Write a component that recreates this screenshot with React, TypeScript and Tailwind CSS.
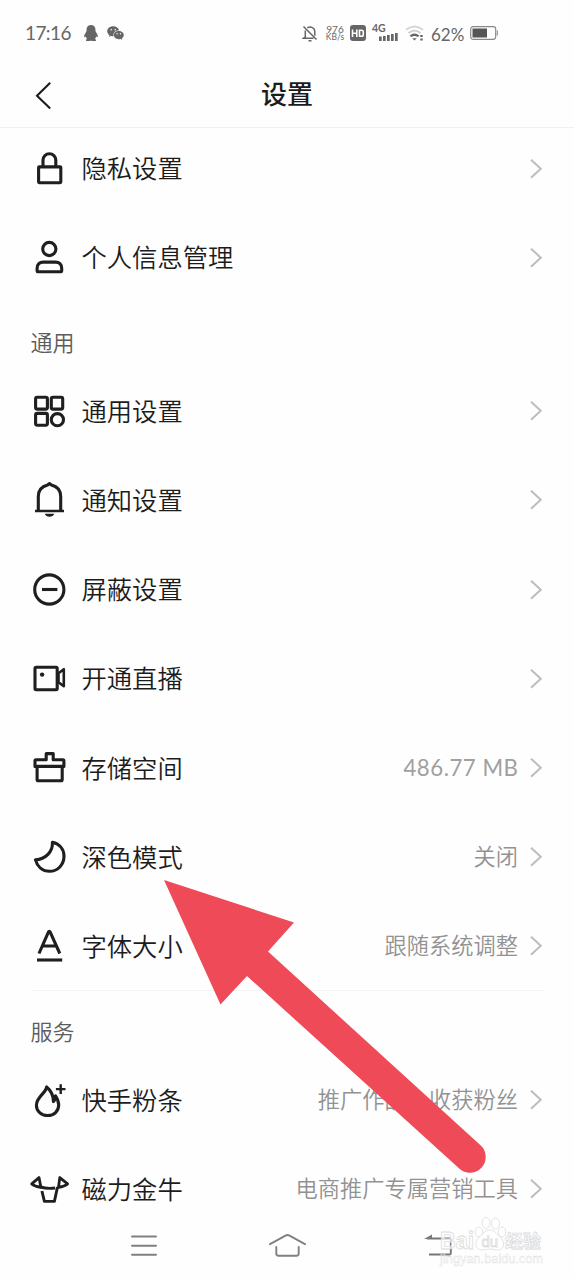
import type { ReactNode } from "react";
import { AiFillWechat } from "react-icons/ai";

function Icon({ children }: { children: ReactNode }) {
  return (
    <svg
      viewBox="0 0 36 36"
      className="h-9 w-9 shrink-0 overflow-visible"
      fill="none"
      stroke="#1f1f1f"
      strokeWidth="3.1"
      strokeLinejoin="round"
    >
      {children}
    </svg>
  );
}

const icons = {
  lock: (
    <Icon>
      <rect x="7.6" y="15.9" width="22.2" height="15.8" rx="0.6" />
      <path d="M12 16V9.1a6.4 6.4 0 0 1 12.8 0V16" />
    </Icon>
  ),
  person: (
    <Icon>
      <circle cx="18.3" cy="9" r="6.6" />
      <path d="M6.1 28.3c0-4 2.6-6.2 6-6.2h12.6c3.4 0 6 2.2 6 6.2v2.2c0 .8-.5 1.3-1.3 1.3h-22c-.8 0-1.3-.5-1.3-1.3z" />
    </Icon>
  ),
  grid: (
    <Icon>
      <rect x="4.6" y="4.3" width="11.8" height="11.8" rx="1.6" />
      <rect x="20.3" y="4.3" width="11.4" height="11.8" rx="1.6" />
      <rect x="4.6" y="20.4" width="11.8" height="11.8" rx="1.6" />
      <circle cx="26.4" cy="26.7" r="6.1" />
    </Icon>
  ),
  bell: (
    <Icon>
      <path d="M7.3 28.6V14.6C7.3 8.3 11.3 4.3 16.6 3l1.9-1.4L20.4 3c5.3 1.3 9.3 5.3 9.3 11.6v14" />
      <path d="M4 29h29" strokeWidth="2.5" />
      <path d="M13.7 31.800h9.600c-.8 2-2.400 2.900-4.800 2.900s-4-.9-4.800-2.900z" fill="#1f1f1f" stroke="none" />
    </Icon>
  ),
  minus: (
    <Icon>
      <circle cx="18.3" cy="17.5" r="14.6" />
      <path d="M11 17.500h15.400" />
    </Icon>
  ),
  camera: (
    <Icon>
      <rect x="4" y="6.3" width="22.2" height="22.4" rx="1.2" />
      <circle cx="11.1" cy="13.6" r="2.2" fill="#1f1f1f" stroke="none" />
      <path d="M27.500 12.200l5.300-4v17l-5.300-4z" strokeWidth="2.6" />
    </Icon>
  ),
  storage: (
    <Icon>
      <path d="M15.200 9.800V3.600h7v6.200h9.700q1 0 1 1v5.600H4v-5.600q0-1 1-1z" />
      <path d="M6.100 16.500v13q0 1.300 1.300 1.300h22.500q1.300 0 1.300-1.300v-13" />
    </Icon>
  ),
  moon: (
    <Icon>
      <path d="M21.400 3.300C29 5 33 10.600 33 17.300c0 8.400-6.300 15-14.400 15C11.300 32.300 6.300 27.600 4.500 20.800 14.500 20.500 22 12.500 21.400 3.300z" />
    </Icon>
  ),
  font: (
    <Icon>
      <path d="M8 25.500L17.300 4.300q1-2 2 0L28.800 25.500M11.500 18h13.700" />
      <path d="M6 32h25.200" />
    </Icon>
  ),
  flame: (
    <Icon>
      <path d="M15.600 5C15.100 11 5.400 14.900 5.400 23.200c0 5.900 4.900 10.300 11.300 10.300s11-4.500 11-10.400c0-3.300-1.300-6.300-3.200-9.300-.1 2.800-.7 4.700-2.100 5.800 0-6-2.400-11-6.800-14.600z" />
      <path d="M29.700 2.300v9.600M24.900 7.100h9.600" strokeWidth="2.4" />
    </Icon>
  ),
  bull: (
    <Icon>
      <path d="M9.900 16.300C6.200 15.800 2.800 14.800.7 12.900L8 6.600z" strokeWidth="2.8" />
      <path d="M27.500 16.300c3.700-.5 7-1.500 9.100-3.400l-7.800-6.300z" strokeWidth="2.8" />
      <path d="M9.700 16c4.200 1.400 9.400 1.600 14.400 1M10.900 20l2.500 10.400h10L26.500 16" strokeWidth="2.9" />
    </Icon>
  ),
};

function Row({ icon, label, value, first }: { icon: ReactNode; label: string; value?: ReactNode; first?: boolean }) {
  return (
    <div
      className={
        first
          ? "flex h-[85px] items-center pr-8 pb-1 pl-[31px]"
          : "flex h-[89.2px] items-center pr-8 pl-[31px]"
      }
    >
      {icon}
      <span className="ml-[14.5px] pb-px text-[25.3px] leading-8 font-[350] text-[#1c1c1c]">{label}</span>
      <span className="ml-auto text-[22.25px] leading-8 font-[350] whitespace-nowrap text-[#929292]">{value}</span>
      <svg viewBox="0 0 12 20" className="ml-3 h-5 w-3 shrink-0" fill="none" stroke="#bdbdbd" strokeWidth="2">
        <path d="M1 .7l9.800 9L1 18.700" />
      </svg>
    </div>
  );
}

function SectionTitle({ children }: { children: ReactNode }) {
  return (
    <h2 className="h-[64.5px] pt-[25px] pl-[30.5px] text-[22px] leading-8 font-[350] text-[#5c5c5c]">{children}</h2>
  );
}

function StatusBar() {
  return (
    <div className="flex h-[66px] items-center text-[#666666]">
      <span className="ml-[25px] w-[59px] font-['Lato',sans-serif] text-[19px] leading-6 tracking-[-0.6px]">17:16</span>
      <svg viewBox="0 0 14 17" className="h-[17px] w-[14px]" fill="#666666">
        <path d="M7 0C4.300 0 2.500 2 2.500 4.800v1.400L.6 9.600C0 10.800 0 12 .5 12.300l1.300-.9c.2.900.6 1.700 1.200 2.400-.8.500-1.100 1.200-.9 2.200H6l1-.4 1 .4h3.900c.2-1-.1-1.700-.9-2.200.6-.7 1-1.500 1.200-2.400l1.300.9c.5-.3.500-1.500-.1-2.700l-1.900-3.400V4.800C11.500 2 9.700 0 7 0z" />
      </svg>
      <AiFillWechat className="ml-2 h-[20px] w-[19px]" />
      <svg
        viewBox="0 0 16 17"
        className="ml-[177px] h-[17px] w-4"
        fill="none"
        stroke="#666666"
        strokeWidth="1.5"
      >
        <path d="M1.500 1.500l13 13M3.300 5.500v6.700L1.500 13.300h10M5.300 2.900C9 .7 12.800 3 12.800 6.500v4.300M6.500 15.800h3" />
      </svg>
      <div className="ml-[6px] w-[22px] text-center font-['Lato',sans-serif] text-[10px] leading-[8.5px]">
        <div>976</div>
        <div className="text-[8.5px]">KB/s</div>
      </div>
      <svg viewBox="0 0 16 16" className="ml-[4px] h-4 w-4">
        <rect width="16" height="16" rx="3" fill="#666666" />
        <path d="M2.500 4.500v7.500M6.800 4.500v7.500M2.500 8.200h4.300M9.500 5.200h2q1.800 0 1.800 1.800v2.400q0 1.800-1.800 1.800h-2z" fill="none" stroke="#ffffff" strokeWidth="1.6" />
      </svg>
      <div className="ml-[6px] h-[18px] w-[27px]">
        <div className="font-['Lato',sans-serif] text-[10.5px] leading-[9px] font-bold">4G</div>
        <svg viewBox="0 0 19 8" className="ml-[6.5px] h-2 w-[19px]" fill="#666666">
          <path d="M0 3.500h2.700V8H0zM4 3h2.700v5H4zM8 2h2.700v6H8zM12 1h2.700v7H12zM16 0h2.700v8H16z" />
        </svg>
      </div>
      <svg viewBox="0 0 20 16" className="ml-[6px] h-4 w-5" fill="none" strokeWidth="1.8">
        <path d="M1 4.800q8.500-6.600 17 0" stroke="#d5d5d5" />
        <path d="M3.500 8q6-4.700 12 0" stroke="#cccccc" />
        <path d="M4.500 10.800q5-4.600 10 0l-2 1.200q-3-2.200-6 0z" fill="#666666" />
        <path d="M9.500 15.500l-2.300-2.300h4.600z" fill="#666666" />
        <path d="M15.300 10h2.400v2h-2.400zM15.300 13.500h2.400v2h-2.400z" fill="#666666" />
      </svg>
      <span className="ml-[6px] w-[39px] pt-[3px] font-['Lato',sans-serif] text-[17px] leading-5">62%</span>
      <svg viewBox="0 0 28 14" className="h-[14px] w-7">
        <rect x=".7" y=".7" width="25" height="12.6" rx="2.5" fill="none" stroke="#888888" strokeWidth="1.2" />
        <rect x="2.5" y="2.5" width="14.5" height="9" fill="#555555" />
        <path d="M27.300 4.500v5" stroke="#888888" />
      </svg>
    </div>
  );
}

function NavBar() {
  return (
    <nav className="flex h-[45px] items-start pl-[130px]">
      <svg viewBox="0 0 28 24" className="h-6 w-7" fill="none" stroke="#808080" strokeWidth="1.9" strokeLinecap="round">
        <path d="M2 2.500h24M2 11.700h24M2 20.800h24" />
      </svg>
      <svg
        viewBox="0 0 38 24"
        className="ml-[111px] h-6 w-[38px]"
        fill="none"
        stroke="#808080"
        strokeWidth="1.9"
        strokeLinecap="round"
      >
        <path d="M1 10.200L16.500 1.600q2-1.100 4 0L36 10.200M7.300 13v6.600q0 2.200 2.200 2.200h18q2.200 0 2.200-2.200V13" />
      </svg>
      <svg viewBox="0 0 28 24" className="ml-[117px] h-6 w-7" fill="none" stroke="#777777" strokeWidth="1.9">
        <path d="M3 4.500h22.500q1.300 0 1.300 1.300v13.400q0 1.300-1.300 1.300H5" />
        <path d="M0 5l8-4.500V5z" fill="#777777" stroke="none" />
      </svg>
    </nav>
  );
}

function Watermark() {
  return (
    <svg
      viewBox="0 0 110 52"
      className="absolute top-[1216px] left-[438px] h-[52px] w-[110px]"
      fill="#ffffff"
      fillOpacity="0.7"
      stroke="#dcdcdc"
      strokeWidth="0.8"
    >
      <text x="2" y="33" fontSize="23" fontWeight="700" textLength="34" lengthAdjust="spacingAndGlyphs" className="font-['Liberation_Sans',sans-serif]">
        Bai
      </text>
      <ellipse cx="41" cy="16" rx="3.7" ry="4.9" />
      <ellipse cx="48" cy="7" rx="4" ry="5.4" />
      <ellipse cx="57.5" cy="7.5" rx="4" ry="5.4" />
      <ellipse cx="64" cy="16" rx="3.7" ry="4.9" />
      <path d="M52 14c5 0 6 4 10 7 6 5 4 13-2 13-3 0-5-1-8-1s-5 1-8 1c-7 0-8-8-3-13 4-3 6-7 11-7z" />
      <text x="43.500" y="30.500" fontSize="15" fontWeight="400" className="font-['Liberation_Sans',sans-serif]">
        du
      </text>
      <text x="67" y="32" fontSize="18" fontWeight="700" className="font-['Noto_Sans_CJK_SC',sans-serif]">
        经验
      </text>
      <text x="2" y="47" fontSize="12.5" fontWeight="400" textLength="103" strokeWidth="0.4" className="font-['Liberation_Sans',sans-serif]">
        jingyan.baidu.com
      </text>
    </svg>
  );
}

export default function App() {
  return (
    <div className="relative h-[1279px] w-[574px] overflow-hidden bg-[#fefefe] font-['Lato','Noto_Sans_CJK_SC',sans-serif]">
      <StatusBar />
      <header className="grid h-[62px] grid-cols-3 items-center border-b border-[#f0f0f0] pb-1">
        <svg viewBox="0 0 16 28" className="ml-[35px] h-7 w-4" fill="none" stroke="#1c1c1c" strokeWidth="2.1">
          <path d="M15.200 1.700L2 14.700l13.200 12.800" />
        </svg>
        <h1 className="pb-px text-center text-[26px] leading-8 font-medium text-[#1c1c1c]">设置</h1>
      </header>
      <main>
        <Row first icon={icons.lock} label="隐私设置" />
        <Row icon={icons.person} label="个人信息管理" />
        <SectionTitle>通用</SectionTitle>
        <Row icon={icons.grid} label="通用设置" />
        <Row icon={icons.bell} label="通知设置" />
        <Row icon={icons.minus} label="屏蔽设置" />
        <Row icon={icons.camera} label="开通直播" />
        <Row
          icon={icons.storage}
          label="存储空间"
          value={<span className="-mr-[0.5px] font-normal tracking-[0.5px] text-[#a0a0a0]">486.77 MB</span>}
        />
        <Row icon={icons.moon} label="深色模式" value="关闭" />
        <Row icon={icons.font} label="字体大小" value="跟随系统调整" />
        <hr className="mx-[31px] -mt-px border-[#f2f2f2]" />
        <SectionTitle>服务</SectionTitle>
        <Row icon={icons.flame} label="快手粉条" value="推广作品，收获粉丝" />
        <Row icon={icons.bull} label="磁力金牛" value="电商推广专属营销工具" />
      </main>
      <NavBar />
      <svg viewBox="0 0 330 300" className="absolute top-[877px] left-[160px] h-[300px] w-[330px]">
        <path
          d="M4 3L134 45.500 108 74.500 320.500 268.300A15.700 15.700 0 0 1 299.500 291.700L87 99 60.500 127.500z"
          fill="#ee4a58"
        />
      </svg>
      <Watermark />
    </div>
  );
}
